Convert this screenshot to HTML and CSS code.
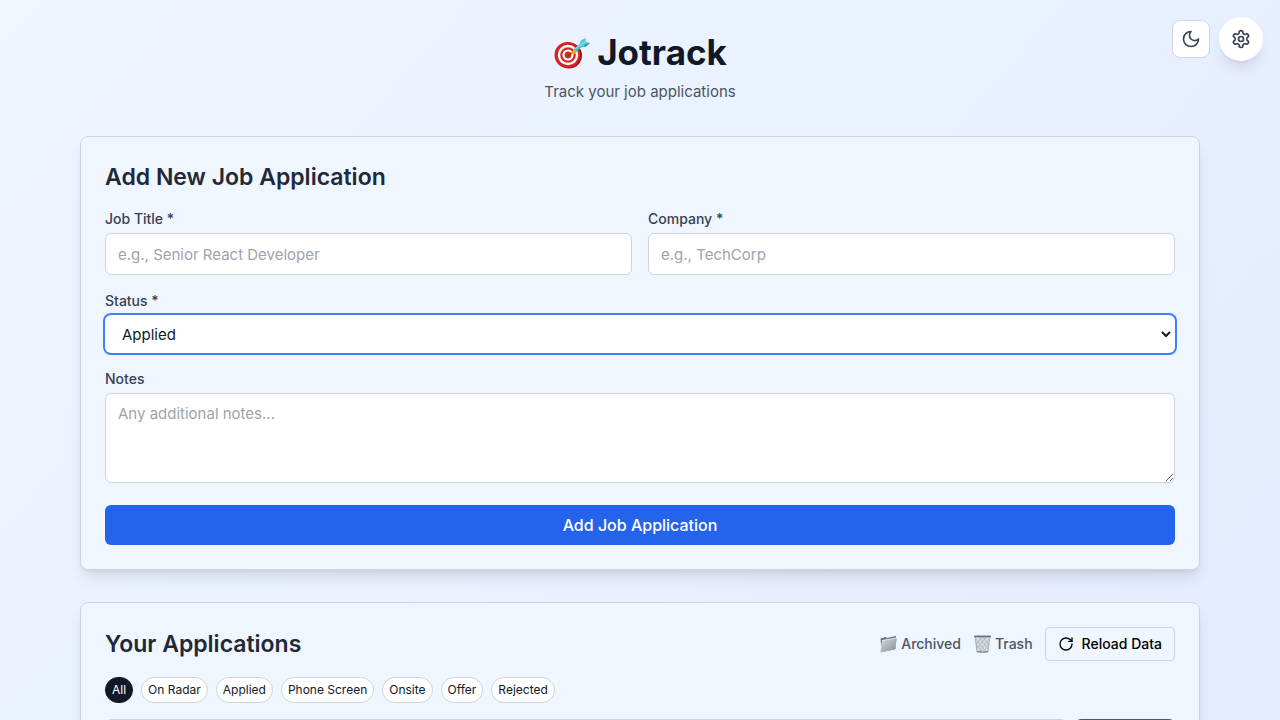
FILE: index.html
```html
<!DOCTYPE html>
<html lang="en">
<head>
<meta charset="utf-8">
<meta name="viewport" content="width=device-width, initial-scale=1">
<title>Jotrack</title>
<link rel="stylesheet" href="styles.css">
</head>
<body>
<div class="floating-actions">
  <button class="theme-toggle" type="button" aria-label="Dark mode">
    <svg class="icon-md" viewBox="0 0 24 24"><path d="M12 3a6 6 0 0 0 9 9 9 9 0 1 1-9-9Z"/></svg>
  </button>
  <button class="settings-button" type="button" aria-label="Settings">
    <svg class="icon-md" viewBox="0 0 24 24"><path d="M12.220 2h-.440a2 2 0 0 0-2 2v.180a2 2 0 0 1-1 1.730l-.430.250a2 2 0 0 1-2 0l-.150-.080a2 2 0 0 0-2.730.730l-.220.380a2 2 0 0 0 .730 2.730l.150.100a2 2 0 0 1 1 1.720v.510a2 2 0 0 1-1 1.740l-.150.090a2 2 0 0 0-.730 2.730l.220.380a2 2 0 0 0 2.730.730l.150-.080a2 2 0 0 1 2 0l.430.250a2 2 0 0 1 1 1.730V20a2 2 0 0 0 2 2h.440a2 2 0 0 0 2-2v-.180a2 2 0 0 1 1-1.730l.430-.250a2 2 0 0 1 2 0l.150.080a2 2 0 0 0 2.730-.730l.220-.390a2 2 0 0 0-.730-2.730l-.150-.080a2 2 0 0 1-1-1.740v-.500a2 2 0 0 1 1-1.740l.150-.090a2 2 0 0 0 .730-2.730l-.220-.380a2 2 0 0 0-2.730-.730l-.150.080a2 2 0 0 1-2 0l-.430-.250a2 2 0 0 1-1-1.730V4a2 2 0 0 0-2-2z"/><circle cx="12" cy="12" r="3"/></svg>
  </button>
</div>
<main class="page">
  <header class="masthead">
    <h1 class="brand">
      <svg class="brand-mark" viewBox="0 -2 38 34" aria-hidden="true">
        <ellipse cx="16" cy="18.500" rx="13" ry="13" fill="#8f1418"/>
        <circle cx="14.500" cy="18" r="13" fill="#d92125"/>
        <circle cx="15" cy="18" r="10.200" fill="#fff"/>
        <circle cx="15" cy="18" r="7.800" fill="#d3272a"/>
        <circle cx="15" cy="18" r="5.600" fill="#fff"/>
        <circle cx="15" cy="18" r="3.400" fill="#c9301f"/>
        <path d="M15 19l7-6" stroke="#8b3a1c" stroke-width="1.500"/>
        <path d="M18 16l4-5 3 3-5 4z" fill="#e7ae2c"/>
        <path d="M21 12l7-6 2 3-7 6z" fill="#45c5cf"/>
        <path d="M26 8l2-5 5-2-.5 3.500 4.500 1.500-4 3.500-6 .5z" fill="#56ced6"/>
        <path d="M23 14l10-7 4-1-4 3.500-5 .5-4 4z" fill="#2f9dab"/>
        <path d="M22 12l10-7" stroke="#91e6ea" stroke-width="1"/>
      </svg>
      <span>Jotrack</span>
    </h1>
    <p class="tagline">Track your job applications</p>
  </header>

  <section class="card">
    <h2 class="card-title">Add New Job Application</h2>
    <form class="job-form">
      <div class="field-row">
        <div class="field">
          <label class="label" for="title">Job Title *</label>
          <input class="control" id="title" type="text" placeholder="e.g., Senior React Developer">
        </div>
        <div class="field">
          <label class="label" for="company">Company *</label>
          <input class="control" id="company" type="text" placeholder="e.g., TechCorp">
        </div>
      </div>
      <div class="field">
        <label class="label" for="status">Status *</label>
        <select class="control status-select" id="status">
          <option>On Radar</option>
          <option selected>Applied</option>
          <option>Phone Screen</option>
          <option>Onsite</option>
          <option>Offer</option>
          <option>Rejected</option>
        </select>
      </div>
      <div class="field notes-field">
        <label class="label" for="notes">Notes</label>
        <textarea class="control notes" id="notes" rows="3" placeholder="Any additional notes..."></textarea>
      </div>
      <button class="submit" type="button">Add Job Application</button>
    </form>
  </section>

  <section class="card">
    <div class="list-header">
      <h2 class="list-title">Your Applications</h2>
      <div class="list-actions">
        <a class="list-link" href="#archived">
          <svg class="link-icon" viewBox="0 0 19 18" aria-hidden="true">
            <defs><linearGradient id="folder" x2="1" y2="1"><stop stop-color="#d8dcdf"/><stop offset="1" stop-color="#858b91"/></linearGradient></defs>
            <path d="M1.500 3.500l5-1.500 1.500 1 9-2-.5 13-14 3z" fill="#68727a"/>
            <path d="M3 5l14-2.500-1 12L1.500 17z" fill="#e6eaec"/>
            <path d="M3 6l15-3-2 11.500L1.500 17.500z" fill="url(#folder)"/>
          </svg>
          <span>Archived</span>
        </a>
        <a class="list-link" href="#trash">
          <svg class="link-icon" viewBox="0 0 19 18" aria-hidden="true">
            <path d="M2 1h15l-2 16q-5.500 1.500-11 0z" fill="#d5dce0" stroke="#9aa4aa" stroke-width=".8"/>
            <path d="M3 4l10 13M6 2l9 12M10 2l6 8M3 9l6 8M16 4L6 17M13 2L4 13M9 2L3 9M16 9l-6 8" stroke="#8f9aa1" stroke-width=".5"/>
            <path d="M1 1.500h17" stroke="#657078" stroke-width="1.500"/>
            <path d="M4 16.500q5.500 1 11 0" stroke="#7d8990" fill="none"/>
          </svg>
          <span>Trash</span>
        </a>
        <button class="reload" type="button">
          <svg class="icon-sm" viewBox="0 0 24 24"><path d="M21 12a9 9 0 1 1-9-9c2.520 0 4.930 1 6.740 2.740L21 8"/><path d="M21 3v5h-5"/></svg>
          <span>Reload Data</span>
        </button>
      </div>
    </div>
    <div class="filters">
      <button class="pill pill-active" type="button">All</button>
      <button class="pill" type="button">On Radar</button>
      <button class="pill" type="button">Applied</button>
      <button class="pill" type="button">Phone Screen</button>
      <button class="pill" type="button">Onsite</button>
      <button class="pill" type="button">Offer</button>
      <button class="pill" type="button">Rejected</button>
    </div>
    <div class="search-row">
      <input class="control search" type="search" aria-label="Find applications">
      <button class="search-button" type="button" aria-label="Find"></button>
    </div>
  </section>
</main>
</body>
</html>
```
FILE: styles.css
```css
*, *::before, *::after { box-sizing: border-box; }
body {
  margin: 0;
  min-height: 100vh;
  font-family: Inter, "Liberation Sans", sans-serif;
  font-size: 16px;
  line-height: 24px;
  color: #111827;
  background: linear-gradient(to bottom right, #eff6ff, #e0e7ff);
}
h1, h2, p { margin: 0; }
button, input, select, textarea { font: inherit; color: inherit; margin: 0; }
button { cursor: pointer; }
svg { display: block; flex-shrink: 0; }

.page { max-width: 1152px; margin: 0 auto; padding: 32px 16px 640px; }

.floating-actions {
  position: fixed;
  top: 17px;
  right: 17px;
  display: flex;
  align-items: center;
  gap: 9px;
  color: #374151;
}
.theme-toggle, .settings-button {
  display: flex;
  align-items: center;
  justify-content: center;
  padding: 0;
  background: #fff;
}
.theme-toggle { width: 38px; height: 38px; border: 1px solid #d1d5db; border-radius: 8px; }
.settings-button {
  width: 44px;
  height: 44px;
  border: 0;
  border-radius: 50%;
  box-shadow: 0 10px 15px -3px rgba(0, 0, 0, 0.1), 0 4px 6px -4px rgba(0, 0, 0, 0.1);
}
.icon-md, .icon-sm {
  fill: none;
  stroke: currentColor;
  stroke-width: 2;
  stroke-linecap: round;
  stroke-linejoin: round;
}
.icon-md { width: 20px; height: 20px; }
.icon-sm { width: 16px; height: 16px; }

.masthead { display: flex; flex-direction: column; align-items: center; gap: 8px; margin-bottom: 32px; }
.brand { display: flex; align-items: center; gap: 6px; font-size: 35px; line-height: 40px; font-weight: 700; }
.brand-mark { width: 38px; height: 34px; }
.tagline { font-size: 15px; color: #4b5563; }

.card {
  margin-bottom: 32px;
  padding: 24px;
  border: 1px solid #d1d5db;
  border-radius: 8px;
  background: #eff6ff;
  box-shadow: 0 10px 15px -3px rgba(0, 0, 0, 0.1), 0 4px 6px -4px rgba(0, 0, 0, 0.1);
}
.card-title, .list-title { font-size: 23px; line-height: 32px; font-weight: 600; color: #1f2937; }
.card-title { margin-bottom: 16px; }

.job-form { display: flex; flex-direction: column; gap: 16px; }
.field-row { display: grid; grid-template-columns: 1fr 1fr; gap: 16px; }
.field { display: flex; flex-direction: column; gap: 4px; }
.label { font-size: 14px; line-height: 20px; font-weight: 500; color: #374151; }
.control {
  width: 100%;
  padding: 8px 12px;
  border: 1px solid #d1d5db;
  border-radius: 6px;
  background: #fff;
  font-size: 15px;
  line-height: 24px;
  outline: none;
}
input.control { height: 42px; }
.control::placeholder { color: #9ca3af; opacity: 1; }
.status-select {
  height: 38px;
  border-color: transparent;
  box-shadow: 0 0 0 2px #3b82f6;
}
.notes { display: block; resize: vertical; }
.notes-field { margin-bottom: 6px; }
.submit {
  padding: 8px 16px;
  border: 0;
  border-radius: 6px;
  background: #2563eb;
  color: #fff;
  font-weight: 500;
}

.list-header { display: flex; align-items: center; justify-content: space-between; margin-bottom: 16px; }
.list-actions { display: flex; align-items: center; gap: 12px; font-size: 14px; line-height: 20px; font-weight: 500; }
.list-link { display: flex; align-items: center; gap: 3px; color: #4b5563; text-decoration: none; }
.link-icon { width: 19px; height: 18px; }
.reload {
  display: flex;
  align-items: center;
  gap: 8px;
  padding: 6px 12px;
  border: 1px solid #d1d5db;
  border-radius: 4px;
  background: transparent;
  color: #000;
}
.filters { display: flex; flex-wrap: wrap; gap: 8px; margin-bottom: 16px; }
.pill {
  padding: 4px 6px;
  border: 1px solid #d1d5db;
  border-radius: 13px;
  background: #fff;
  font-size: 12px;
  line-height: 16px;
}
.pill-active { border-color: #111827; background: #111827; color: #fff; }
.search-row { display: flex; gap: 8px; }
.search { flex: 1; min-width: 0; }
.search-button { width: 100px; border: 0; border-radius: 6px; background: #4b5563; }
```
